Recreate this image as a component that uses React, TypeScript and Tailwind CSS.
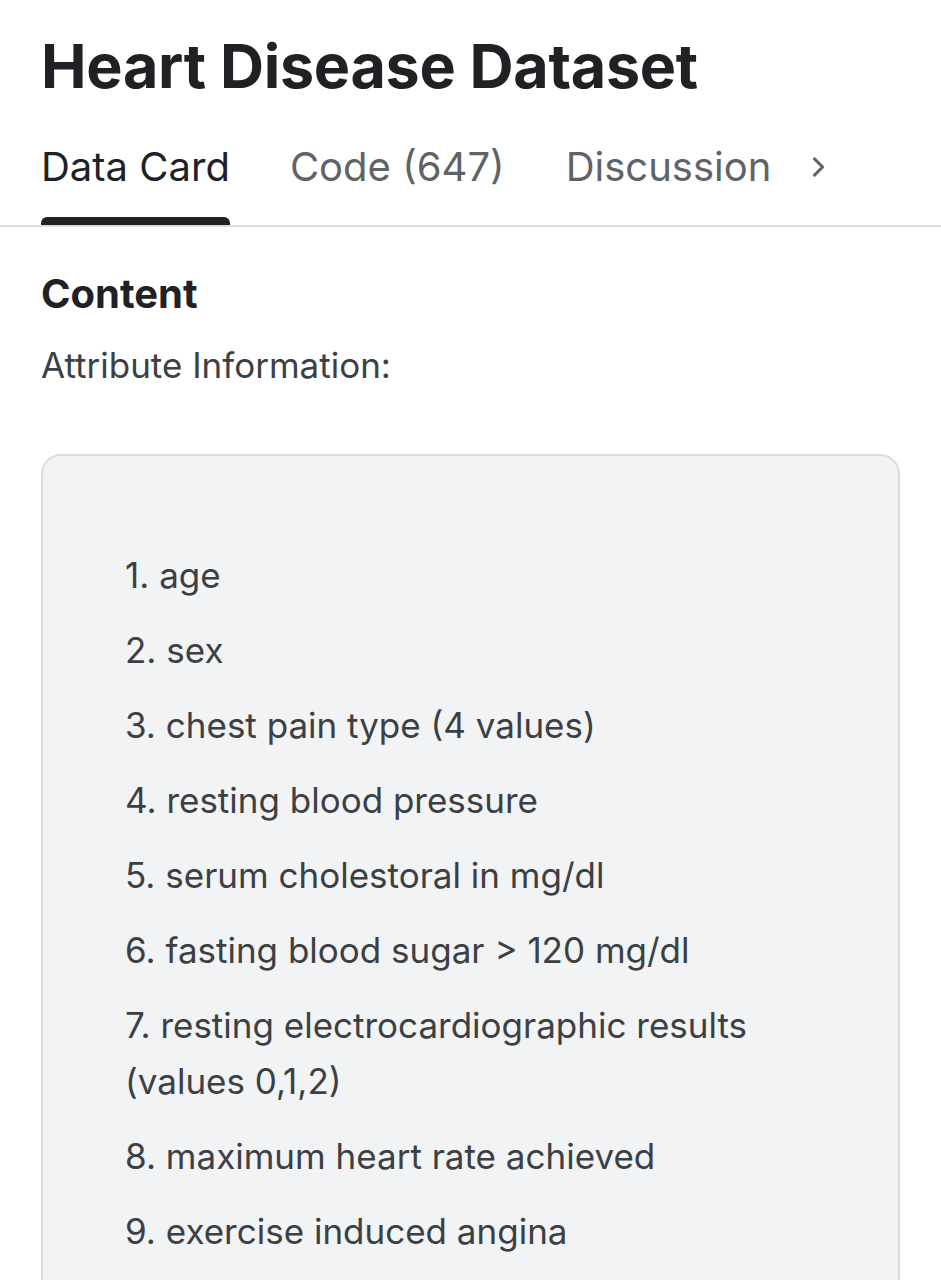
const items = [
  "age",
  "sex",
  "chest pain type (4 values)",
  "resting blood pressure",
  "serum cholestoral in mg/dl",
  "fasting blood sugar > 120 mg/dl",
  "resting electrocardiographic results (values 0,1,2)",
  "maximum heart rate achieved",
  "exercise induced angina",
  "oldpeak = ST depression induced by exercise relative to rest",
];

export default function App() {
  return (
    <div className="min-h-screen bg-white font-['Inter',sans-serif] text-[#202124]">
      <div className="px-[41px] pt-[26px]">
        <h1 className="text-[61px] font-bold leading-[80px] tracking-[-0.3px]">Heart Disease Dataset</h1>
      </div>

      {/* tabs */}
      <div className="mt-[35px] flex items-start border-b-2 border-[#dadce0] px-[41px]">
        <div className="flex flex-col items-start">
          <span className="text-[40px] leading-[52px]">Data Card</span>
          <span className="mt-[24px] h-[8px] w-full rounded-t-[6px] bg-[#202124]" />
        </div>
        <span className="ml-[60px] text-[40px] leading-[52px] text-[#5f6368]">Code (647)</span>
        <span className="ml-[61px] text-[40px] leading-[52px] text-[#5f6368]">Discussion</span>
        <svg className="ml-[33px] mt-[12px]" width="28" height="28" viewBox="0 0 24 24" fill="none" stroke="#5f6368" strokeWidth="2.6" strokeLinecap="round" strokeLinejoin="round">
          <path d="M9 5l7 7-7 7" />
        </svg>
      </div>

      <div className="px-[41px] pt-[41px]">
        <h2 className="text-[40px] font-bold leading-[52px]">Content</h2>
        <p className="mt-[23px] text-[35px] leading-[44px] text-[#3c4043]">Attribute Information:</p>

        <div className="mt-[67px] rounded-[20px] border-2 border-[#dadce0] bg-[#f1f3f4] pl-[82px] pr-[40px] pt-[91px] pb-[40px]">
          <ol className="flex flex-col gap-[19px] text-[35px] leading-[56px] text-[#3c4043]">
            {items.map((t, i) => (
              <li key={i}>
                {i + 1}. {t}
              </li>
            ))}
          </ol>
        </div>
      </div>
    </div>
  );
}
